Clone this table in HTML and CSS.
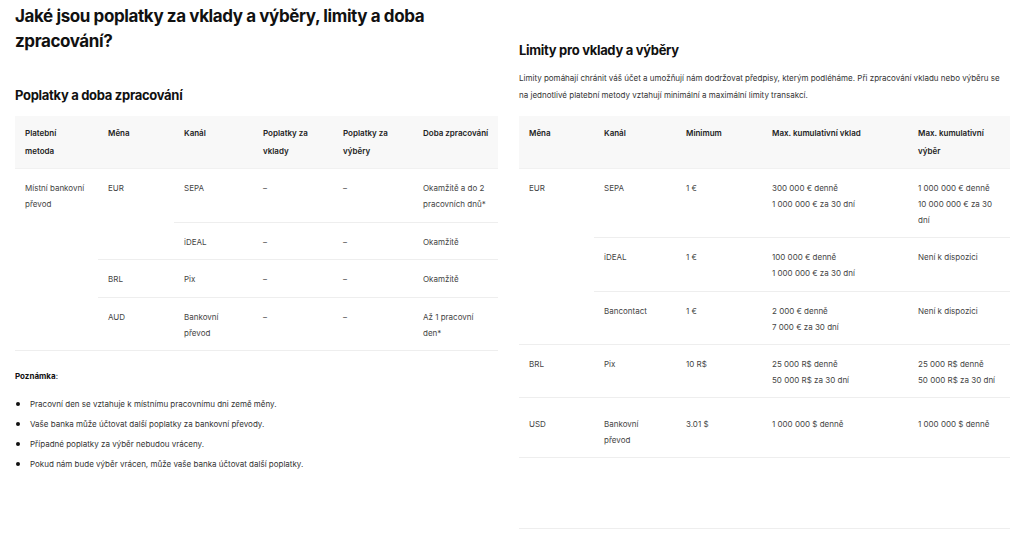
FILE: index.html
```html
<!DOCTYPE html>
<html lang="cs">
<head>
<meta charset="utf-8">
<link rel="stylesheet" href="styles.css">
</head>
<body>
<div class="page">
  <section class="col left">
    <h1 class="title">Jaké jsou poplatky za vklady a výběry, limity a doba zpracování?</h1>
    <h2 class="sub sub-left">Poplatky a doba zpracování</h2>
    <table class="tbl tbl-left">
      <colgroup>
        <col class="c83"><col class="c76"><col class="c79"><col class="c80"><col class="c80"><col class="c85">
      </colgroup>
      <thead>
        <tr><th class="th-narrow">Platební metoda</th><th>Měna</th><th>Kanál</th><th>Poplatky za vklady</th><th>Poplatky za výběry</th><th class="th-wide">Doba zpracování</th></tr>
      </thead>
      <tbody>
        <tr><td rowspan="4">Místní bankovní převod</td><td rowspan="2">EUR</td><td>SEPA</td><td>–</td><td>–</td><td>Okamžitě a do 2 pracovních dnů*</td></tr>
        <tr><td>iDEAL</td><td>–</td><td>–</td><td>Okamžitě</td></tr>
        <tr><td>BRL</td><td>Pix</td><td>–</td><td>–</td><td>Okamžitě</td></tr>
        <tr><td>AUD</td><td>Bankovní převod</td><td>–</td><td>–</td><td>Až 1 pracovní den*</td></tr>
      </tbody>
    </table>
    <p class="note-title"><strong>Poznámka</strong>:</p>
    <ul class="notes">
      <li>Pracovní den se vztahuje k místnímu pracovnímu dni země měny.</li>
      <li>Vaše banka může účtovat další poplatky za bankovní převody.</li>
      <li>Případné poplatky za výběr nebudou vráceny.</li>
      <li>Pokud nám bude výběr vrácen, může vaše banka účtovat další poplatky.</li>
    </ul>
  </section>
  <section class="col right">
    <h2 class="sub sub-right">Limity pro vklady a výběry</h2>
    <p class="intro">Limity pomáhají chránit váš účet a umožňují nám dodržovat předpisy, kterým podléháme. Při zpracování vkladu nebo výběru se na jednotlivé platební metody vztahují minimální a maximální limity transakcí.</p>
    <table class="tbl tbl-right">
      <colgroup>
        <col class="c75"><col class="c82"><col class="c86"><col class="c146"><col class="c102">
      </colgroup>
      <thead>
        <tr><th>Měna</th><th>Kanál</th><th>Minimum</th><th>Max. kumulativní vklad</th><th>Max. kumulativní výběr</th></tr>
      </thead>
      <tbody>
        <tr><td rowspan="3">EUR</td><td>SEPA</td><td>1 €</td><td>300 000 € denně<br>1 000 000 € za 30 dní</td><td>1 000 000 € denně<br>10 000 000 € za 30 dní</td></tr>
        <tr><td>iDEAL</td><td>1 €</td><td>100 000 € denně<br>1 000 000 € za 30 dní</td><td>Není k dispozici</td></tr>
        <tr><td>Bancontact</td><td>1 €</td><td>2 000 € denně<br>7 000 € za 30 dní</td><td>Není k dispozici</td></tr>
        <tr><td>BRL</td><td>Pix</td><td>10 R$</td><td>25 000 R$ denně<br>50 000 R$ za 30 dní</td><td>25 000 R$ denně<br>50 000 R$ za 30 dní</td></tr>
        <tr class="row-usd"><td>USD</td><td>Bankovní převod</td><td>3.01 $</td><td>1 000 000 $ denně</td><td>1 000 000 $ denně</td></tr>
        <tr class="row-empty"><td colspan="5"></td></tr>
      </tbody>
    </table>
  </section>
</div>
</body>
</html>
```

FILE: styles.css
```css
* { box-sizing: border-box; }
html, body { margin: 0; padding: 0; background: #fff; }
body {
  font-family: Inter, "Noto Sans", sans-serif;
  color: #333;
  width: 1024px;
  height: 544px;
  overflow: hidden;
}
.page {
  display: flex;
  gap: 21px;
  padding-left: 15px;
}
.col.left { width: 483px; flex: none; }
.col.right { width: 491px; flex: none; }

.title {
  margin: 4px 0 0;
  font-size: 17px;
  line-height: 25px;
  font-weight: 700;
  color: #111;
  letter-spacing: -0.4px;
}
.sub {
  margin: 0;
  font-size: 13px;
  line-height: 18px;
  font-weight: 700;
  color: #111;
  letter-spacing: -0.3px;
}
.sub-left { margin-top: 32px; margin-bottom: 12px; }
.sub-right { margin-top: 41px; }
.intro {
  margin: 11px 0 12px;
  font-size: 8px;
  line-height: 17px;
  color: #333;
}

.tbl {
  border-collapse: collapse;
  table-layout: fixed;
  font-size: 8px;
  line-height: 16px;
  color: #444;
}
.tbl-left { width: 483px; }
.tbl-right { width: 491px; }
.c75 { width: 75px; } .c76 { width: 76px; } .c79 { width: 79px; } .c80 { width: 80px; }
.c82 { width: 82px; } .c83 { width: 83px; } .c85 { width: 85px; } .c86 { width: 86px; }
.c102 { width: 102px; } .c146 { width: 146px; }

.tbl th {
  background: #f8f8f8;
  text-align: left;
  vertical-align: top;
  font-weight: 600;
  color: #222;
  line-height: 18px;
  padding: 8px 10px;
  border-bottom: 1px solid #f1f1f1;
}
.tbl th.th-narrow { padding-right: 16px; }
.tbl th.th-wide { padding-right: 0; }
.tbl td {
  vertical-align: top;
  text-align: left;
  padding: 11px 10px 9.3px;
  border-bottom: 1px solid #eeeeee;
}
.tbl-left td { padding-bottom: 9.6px; }
.tbl-right .row-usd td { padding-top: 18px; padding-bottom: 9.3px; }
.tbl-right .row-empty td { height: 71px; padding: 0; }

.note-title {
  margin: 18px 0 0;
  font-size: 8px;
  line-height: 14px;
  color: #111;
}
.note-title strong { font-weight: 700; }
.notes {
  list-style: none;
  margin: 14px 0 0;
  padding: 0;
  font-size: 8px;
  line-height: 14px;
  color: #333;
}
.notes li {
  position: relative;
  padding-left: 15px;
  margin-bottom: 6px;
}
.notes li::before {
  content: "";
  position: absolute;
  left: 1px;
  top: 5px;
  width: 4px;
  height: 4px;
  border-radius: 50%;
  background: #111;
}
```
